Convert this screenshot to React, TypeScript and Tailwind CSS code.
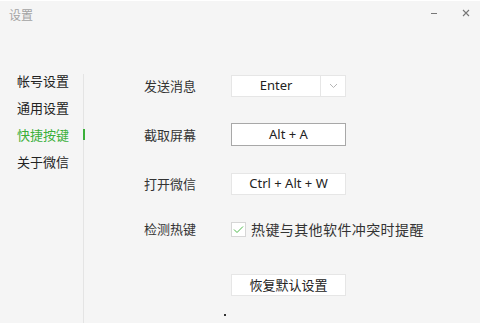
const cjk = { fontFamily: '"Noto Sans CJK SC", "Noto Sans", sans-serif' };
const latin = { fontFamily: '"Noto Sans", "Noto Sans CJK SC", sans-serif' };

const menu = ["帐号设置", "通用设置", "快捷按键", "关于微信"];

function Label({ children }: { children: string }) {
  return (
    <div className="w-[87px] shrink-0 text-[13px] text-[#333]" style={cjk}>
      {children}
    </div>
  );
}

export default function App() {
  return (
    <div className="w-[480px] h-[323px] bg-[#f5f5f5] border-t border-white flex flex-col overflow-hidden">
      {/* title bar */}
      <div className="h-[73px] flex items-start justify-between">
        <div className="pl-[9px] pt-[5px] text-[12px] text-[#a3a3a3]" style={cjk}>
          设置
        </div>
        <div className="flex items-center gap-[24px] pr-[10px] pt-[8px]">
          <svg width="8" height="8" viewBox="0 0 8 8">
            <path d="M1 4.5H7" stroke="#777" strokeWidth="1" />
          </svg>
          <svg width="8" height="8" viewBox="0 0 8 8">
            <path d="M1 1L7 7M7 1L1 7" stroke="#777" strokeWidth="1.1" />
          </svg>
        </div>
      </div>

      <div className="flex flex-1">
        {/* sidebar */}
        <div className="w-[84px] shrink-0 border-r border-[#e4e4e4]">
          <div className="-mt-[7px] flex flex-col">
            {menu.map((m, i) => (
              <div
                key={m}
                className={`relative h-[27px] flex items-center pl-[17px] text-[13px] ${
                  i === 2 ? "text-[#3bb03a]" : "text-[#222]"
                }`}
                style={cjk}
              >
                {m}
                {i === 2 && (
                  <span className="absolute right-[-2px] top-[8px] w-[2px] h-[11px] bg-[#3bb03a]" />
                )}
              </div>
            ))}
          </div>
        </div>

        {/* content */}
        <div className="flex flex-col pl-[60px]">
          <div className="mt-[1px] flex items-center h-[22px]">
            <Label>发送消息</Label>
            <div className="w-[115px] h-[22px] bg-white border border-[#e6e6e6] flex">
              <div className="w-[88px] flex items-center justify-center text-[13px] text-[#222]" style={latin}>
                Enter
              </div>
              <div className="flex-1 border-l border-[#e6e6e6] flex items-center justify-center">
                <svg width="9" height="6" viewBox="0 0 9 6">
                  <path d="M1 1L4.5 4.5L8 1" fill="none" stroke="#b5b5b5" strokeWidth="1" />
                </svg>
              </div>
            </div>
          </div>

          <div className="mt-[26px] flex items-center h-[23px]">
            <Label>截取屏幕</Label>
            <div className="w-[115px] h-[23px] bg-white border border-[#a8a8a8] flex items-center justify-center text-[13px] text-[#222]" style={latin}>
              Alt + A
            </div>
          </div>

          <div className="mt-[27px] flex items-center h-[22px]">
            <Label>打开微信</Label>
            <div className="w-[115px] h-[22px] bg-white border border-[#e6e6e6] flex items-center justify-center text-[13px] text-[#222]" style={latin}>
              Ctrl + Alt + W
            </div>
          </div>

          <div className="mt-[23px] flex items-center h-[22px]">
            <Label>检测热键</Label>
            <div className="w-[15px] h-[15px] bg-white border border-[#d6d6d6] flex items-center justify-center">
              <svg width="11" height="9" viewBox="0 0 11 9">
                <path d="M1 4.5L4 7.5L10 1.5" fill="none" stroke="#4cb84a" strokeWidth="1" />
              </svg>
            </div>
            <div className="ml-[5px] text-[14px] tracking-[0.4px] text-[#333] whitespace-nowrap" style={cjk}>
              热键与其他软件冲突时提醒
            </div>
          </div>

          <div className="mt-[34px] ml-[87px] w-[115px] h-[22px] bg-white border border-[#e6e6e6] flex items-center justify-center text-[13px] text-[#222]" style={cjk}>
            恢复默认设置
          </div>

          <div className="mt-[18px] ml-[80px] w-[2px] h-[2px] bg-[#333]" />
        </div>
      </div>
    </div>
  );
}
